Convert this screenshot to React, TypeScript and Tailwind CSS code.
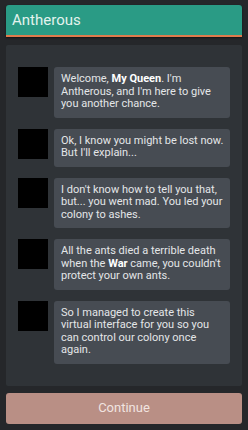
const messages = [
  <>
    Welcome, <b className="font-bold text-white">My Queen</b>. I'm Antherous, and I'm here to give you another chance.
  </>,
  <>Ok, I know you might be lost now. But I'll explain...</>,
  <>I don't know how to tell you that, but... you went mad. You led your colony to ashes.</>,
  <>
    All the ants died a terrible death when the <b className="font-bold text-white">War</b> came, you couldn't protect your own ants.
  </>,
  <>So I managed to create this virtual interface for you so you can control our colony once again.</>,
];

export default function App() {
  return (
    <div
      className="w-[248px] h-[430px] bg-[#25272a] px-[6px] pt-[5px] flex flex-col"
      style={{ fontFamily: "Roboto, 'Noto Sans', sans-serif" }}
    >
      <div className="h-[32px] bg-[#2a9b85] rounded-t-[3px] border-b-[2px] border-[#df7b4d] flex items-center px-[6px] shadow-[0_1px_2px_rgba(0,0,0,0.5)]">
        <h1 className="text-[15px] text-[#e3f3ee] leading-none">Antherous</h1>
      </div>

      <div className="mt-[8px] bg-[#2f3337] rounded-[2px] px-[12px] py-[22px] flex flex-col gap-[11px]">
        {messages.map((msg, i) => (
          <div key={i} className="flex gap-[6px] items-start">
            <div className="w-[30px] h-[30px] bg-black shrink-0" />
            <div className="flex-1 bg-[#474c53] rounded-[3px] pl-[7px] pr-[4px] pt-[6px] pb-[7px] text-[11px] leading-[12.5px] text-[#e4e6e8]">
              {msg}
            </div>
          </div>
        ))}
      </div>

      <button className="mt-[7px] h-[31px] w-full bg-[#b98f85] rounded-[3px] text-[13px] text-[#f1e4e0]">
        Continue
      </button>
    </div>
  );
}
